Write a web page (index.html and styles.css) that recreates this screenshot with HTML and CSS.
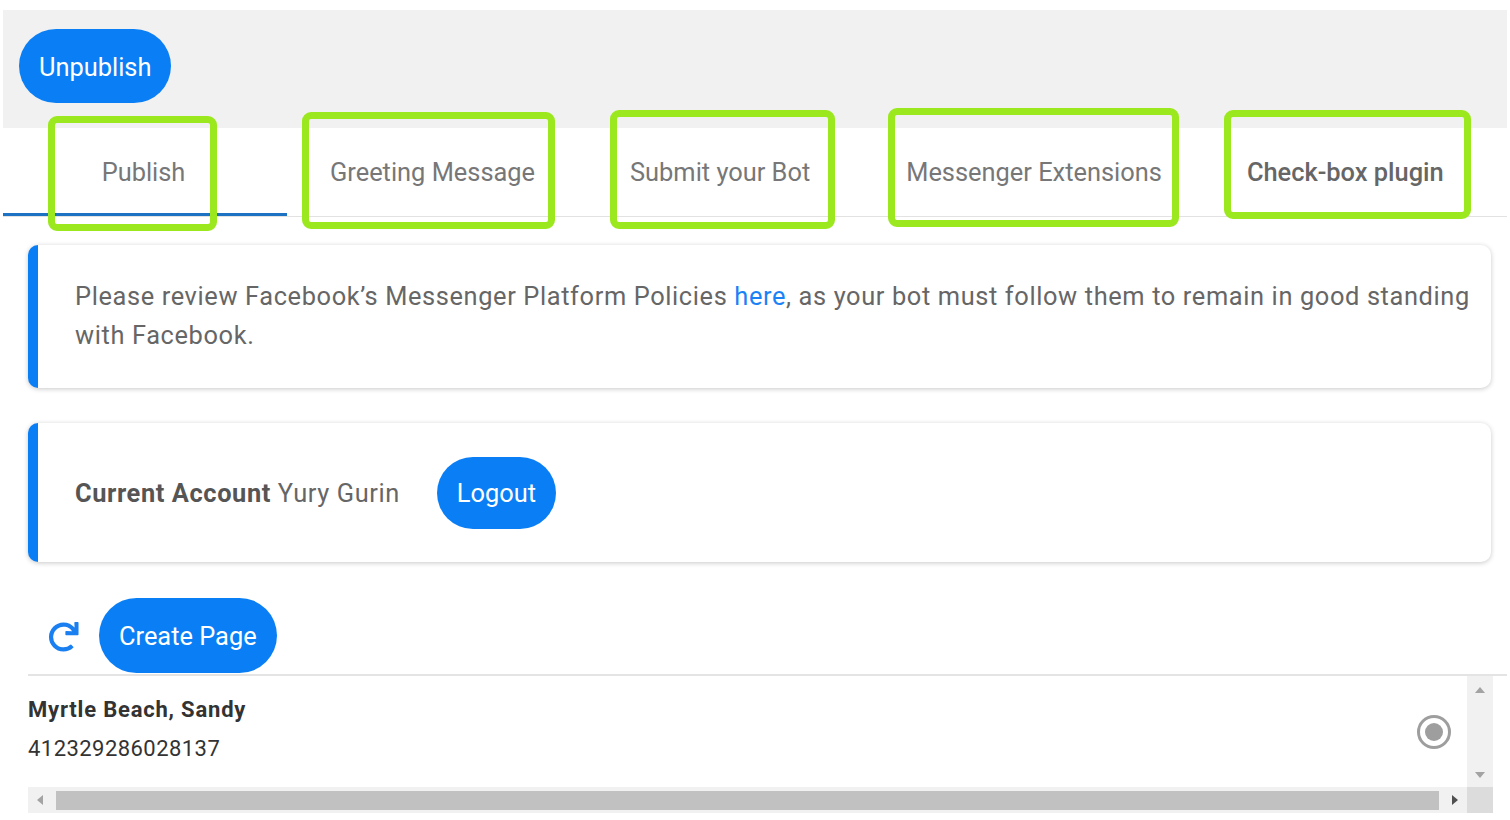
FILE: index.html
```html
<!DOCTYPE html>
<html>
<head>
<meta charset="utf-8">
<link rel="stylesheet" href="styles.css">
</head>
<body>
<div class="page">
  <header class="topbar">
    <button class="btn btn-unpublish">Unpublish</button>
  </header>
  <nav class="tabs">
    <div class="tab tab-publish active">Publish</div>
    <div class="tab tab-greeting">Greeting Message</div>
    <div class="tab tab-submit">Submit your Bot</div>
    <div class="tab tab-ext">Messenger Extensions</div>
    <div class="tab tab-check">Check-box plugin</div>
    <span class="hl hl-1"></span>
    <span class="hl hl-2"></span>
    <span class="hl hl-3"></span>
    <span class="hl hl-4"></span>
    <span class="hl hl-5"></span>
  </nav>
  <section class="card card-policy">
    <p>Please review Facebook’s Messenger Platform Policies <a class="link">here</a>, as your bot must follow them to remain in good standing with Facebook.</p>
  </section>
  <section class="card card-account">
    <span class="acct"><b>Current Account</b> Yury Gurin</span>
    <button class="btn btn-logout">Logout</button>
  </section>
  <div class="toolbar">
    <svg class="refresh" viewBox="0 0 512 512"><path fill="#1a7ff0" d="M500.33 0h-47.41a12 12 0 0 0-12 12.48l4 82.76A247.42 247.42 0 0 0 256 8C119.34 8 7.9 119.53 8 256.19 8.1 393.07 119.1 504 256 504a247.1 247.1 0 0 0 166.18-63.91 12 12 0 0 0 .48-17.43l-34-34a12 12 0 0 0-16.38-.55A176 176 0 1 1 402.1 157.8l-101.53-4.87a12 12 0 0 0-12.57 12v47.41a12 12 0 0 0 12 12h200.33a12 12 0 0 0 12-12V12a12 12 0 0 0-12-12z"/></svg>
    <button class="btn btn-create">Create Page</button>
  </div>
  <div class="list">
    <div class="list-body">
      <div class="item">
        <div class="item-text">
          <div class="item-name">Myrtle Beach, Sandy</div>
          <div class="item-id">412329286028137</div>
        </div>
        <svg class="radio" viewBox="0 0 36 36"><circle cx="18" cy="18" r="15.5" fill="none" stroke="#9e9e9e" stroke-width="3"/><circle cx="18" cy="18" r="9" fill="#9e9e9e"/></svg>
      </div>
    </div>
    <div class="vscroll">
      <svg class="arr" viewBox="0 0 12 8"><path d="M1 7L6 1L11 7Z" fill="#a3a3a3"/></svg>
      <svg class="arr" viewBox="0 0 12 8"><path d="M1 1L6 7L11 1Z" fill="#a3a3a3"/></svg>
    </div>
    <div class="hscroll">
      <svg class="harr" viewBox="0 0 8 12"><path d="M7 1L1 6L7 11Z" fill="#a3a3a3"/></svg>
      <div class="thumb"></div>
      <svg class="harr" viewBox="0 0 8 12"><path d="M1 1L7 6L1 11Z" fill="#505050"/></svg>
    </div>
    <div class="corner"></div>
  </div>
</div>
</body>
</html>
```
FILE: styles.css
```css
* { box-sizing: border-box; }
html, body { margin: 0; padding: 0; background: #fff; }
body { font-family: Roboto, "Noto Sans", sans-serif; }
.page { padding: 10px 3px 0 3px; width: 1510px; }

.topbar {
  background: #f1f1f1;
  height: 118px;
  padding: 19px 0 0 16px;
}
.btn {
  font-family: Roboto, sans-serif;
  border: none;
  background: #0a7ff5;
  color: #fff;
  border-radius: 40px;
  font-size: 25.4px;
  cursor: pointer;
}
.btn-unpublish { height: 74px; padding: 0 20px 0 20px; padding-top: 2px; }

.tabs {
  position: relative;
  display: flex;
  height: 89px;
  border-bottom: 1px solid #e2e2e2;
}
.tab {
  display: flex;
  align-items: center;
  justify-content: center;
  font-size: 25.4px;
  color: #777;
  height: 88px;
  white-space: nowrap;
}
.tab-publish { width: 284px; padding-right: 3px; }
.tab-publish.active { border-bottom: 3px solid #1e72c4; padding-top: 3px; }
.tab-greeting { padding: 0 47px 0 43px; }
.tab-submit { padding: 0 47px 0 48px; }
.tab-ext { padding: 0 42px 0 49px; }
.tab-check { padding: 0 40px 0 43px; color: #666; font-weight: 500; }

.hl {
  position: absolute;
  border: 7px solid #9be81e;
  border-radius: 9px;
  pointer-events: none;
}
.hl-1 { left: 45px; top: -12px; width: 169px; height: 115px; }
.hl-2 { left: 299px; top: -16px; width: 253px; height: 117px; }
.hl-3 { left: 607px; top: -18px; width: 225px; height: 119px; }
.hl-4 { left: 885px; top: -20px; width: 291px; height: 119px; }
.hl-5 { left: 1221px; top: -18px; width: 247px; height: 109px; }

.card {
  background: #fff;
  margin: 28px 16px 0 25px;
  border-radius: 10px;
  border-left: 10px solid #0a7ff5;
  box-shadow: 0 1px 5px rgba(0,0,0,0.22);
  padding-left: 37px;
}
.card-policy { padding: 32px 14px 33px 37px; }
.card-policy p {
  margin: 0;
  font-size: 25.4px;
  line-height: 39px;
  letter-spacing: 0.62px;
  color: #666;
}
.link { color: #1a82f7; }
.card-account {
  margin-top: 35px;
  display: flex;
  align-items: center;
  height: 139px;
  gap: 37px;
}
.acct { font-size: 25.4px; color: #666; letter-spacing: 0.6px; }
.acct b { color: #555; font-weight: 700; }
.btn-logout { height: 72px; padding: 0 20px; }

.toolbar {
  display: flex;
  align-items: center;
  margin: 36px 0 0 25px;
  height: 78px;
  padding-bottom: 1px;
  border-bottom: 2px solid #e4e4e4;
}
.refresh { width: 31px; height: 30px; margin: 0 20px 0 20px; position: relative; top: 1px; }
.btn-create { height: 75px; padding: 0 20px; }

.list {
  margin-left: 25px;
  display: grid;
  grid-template-columns: 1fr 26px;
  grid-template-rows: 111px 26px;
  margin-right: 14px;
}
.list-body { overflow: hidden; }
.item {
  display: flex;
  align-items: center;
  justify-content: space-between;
  height: 111px;
  padding-right: 15px;
}
.item-text { font-family: Roboto, sans-serif; color: #333; align-self: flex-start; padding-top: 21px; }
.item-name { font-size: 22px; font-weight: 700; line-height: 26px; letter-spacing: 0.8px; }
.item-id { font-size: 22px; line-height: 26px; margin-top: 13px; letter-spacing: 0.45px; }
.radio { width: 36px; height: 36px; }

.vscroll {
  background: #f1f1f1;
  display: flex;
  flex-direction: column;
  justify-content: space-between;
  align-items: center;
  padding: 10px 0 8px;
}
.arr { width: 12px; height: 8px; }
.hscroll {
  background: #f1f1f1;
  display: flex;
  align-items: center;
  padding: 0 8px;
  gap: 6px;
}
.harr { width: 8px; height: 12px; flex: none; }
.thumb { flex: 1; height: 19px; background: #c1c1c1; margin: 0 6px; }
.corner { background: #dcdcdc; }
```
